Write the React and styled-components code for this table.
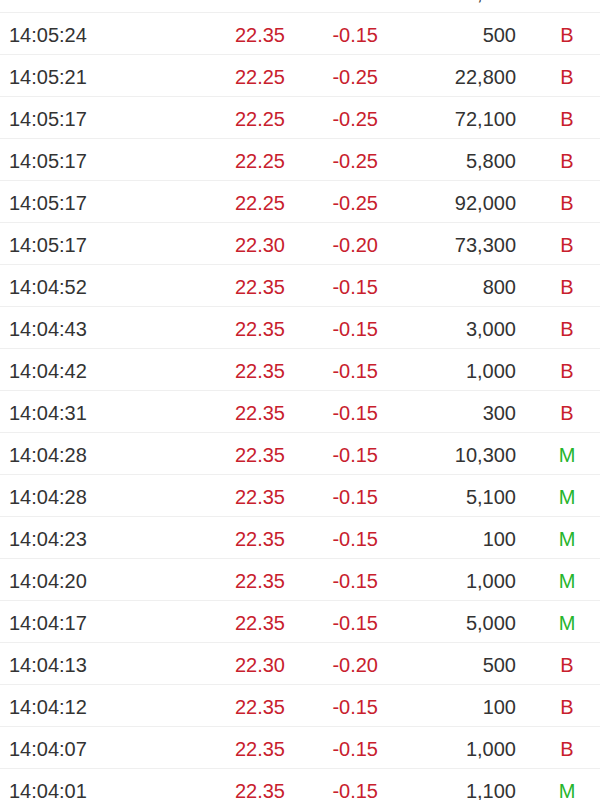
import React from "react";
import styled, {createGlobalStyle} from "styled-components";

const GlobalStyle = createGlobalStyle`
  html, body {
    margin: 0;
    padding: 0;
    background: #ffffff;
    overflow: hidden;
  }
  body {
    font-family: "Liberation Sans", Arial, sans-serif;
  }
`;

const trades = [
  ['14:05:25', '22.35', '-0.15', '1,000', 'B'],
  ['14:05:24', '22.35', '-0.15', '500', 'B'],
  ['14:05:21', '22.25', '-0.25', '22,800', 'B'],
  ['14:05:17', '22.25', '-0.25', '72,100', 'B'],
  ['14:05:17', '22.25', '-0.25', '5,800', 'B'],
  ['14:05:17', '22.25', '-0.25', '92,000', 'B'],
  ['14:05:17', '22.30', '-0.20', '73,300', 'B'],
  ['14:04:52', '22.35', '-0.15', '800', 'B'],
  ['14:04:43', '22.35', '-0.15', '3,000', 'B'],
  ['14:04:42', '22.35', '-0.15', '1,000', 'B'],
  ['14:04:31', '22.35', '-0.15', '300', 'B'],
  ['14:04:28', '22.35', '-0.15', '10,300', 'M'],
  ['14:04:28', '22.35', '-0.15', '5,100', 'M'],
  ['14:04:23', '22.35', '-0.15', '100', 'M'],
  ['14:04:20', '22.35', '-0.15', '1,000', 'M'],
  ['14:04:17', '22.35', '-0.15', '5,000', 'M'],
  ['14:04:13', '22.30', '-0.20', '500', 'B'],
  ['14:04:12', '22.35', '-0.15', '100', 'B'],
  ['14:04:07', '22.35', '-0.15', '1,000', 'B'],
  ['14:04:01', '22.35', '-0.15', '1,100', 'M'],
];

const List = styled.div`
  margin-top: -29px;
  width: 600px;
`;

const Row = styled.div`
  display: grid;
  grid-template-columns: 176px 100px 93px 138px 1fr;
  align-items: center;
  height: 41px;
  padding-left: 9px;
  padding-top: 3px;
  box-sizing: content-box;
  height: 38px;
  border-bottom: 1px solid #efefef;
  font-size: 20px;
  line-height: 22px;
  color: #333333;
`;

const Time = styled.div`
  text-align: left;
`;

const Num = styled.div`
  text-align: right;
  color: ${props => props.red ? '#c8202d' : '#333333'};
`;

const Side = styled.div`
  text-align: center;
  padding-left: 18px;
  color: ${props => props.side === 'M' ? '#25b52c' : '#c8202d'};
`;

export default function App() {
  return (
    <>
      <GlobalStyle/>
      <List>
        {trades.map(([time, price, change, volume, side], i) => (
          <Row key={i}>
            <Time>{time}</Time>
            <Num red>{price}</Num>
            <Num red>{change}</Num>
            <Num>{volume}</Num>
            <Side side={side}>{side}</Side>
          </Row>
        ))}
      </List>
    </>
  );
}
